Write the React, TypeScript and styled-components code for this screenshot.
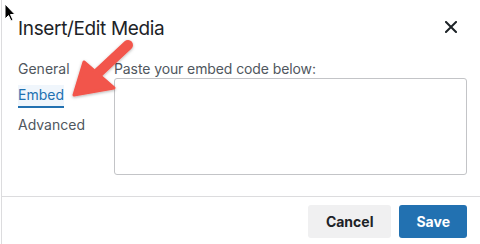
import React from "react";
import styled, { createGlobalStyle } from "styled-components";

const GlobalStyle = createGlobalStyle`
  html, body {
    margin: 0;
    padding: 0;
    background: #ffffff;
  }
  * {
    box-sizing: border-box;
  }
`;

const Dialog = styled.div`
  position: relative;
  width: 480px;
  height: 244px;
  margin-left: 1px;
  border-left: 1px solid #dcdcde;
  background: #ffffff;
  display: flex;
  flex-direction: column;
  font-family: Inter, "Noto Sans", "Liberation Sans", sans-serif;
  overflow: hidden;
`;

const Header = styled.div`
  height: 58px;
  display: flex;
  align-items: center;
  justify-content: space-between;
  padding: 0 20px 0 16px;
`;

const Title = styled.h1`
  margin: 0;
  font-size: 19px;
  line-height: 24px;
  font-weight: 400;
  color: #1d2327;
  letter-spacing: -0.35px;
`;

const CloseButton = styled.button`
  width: 20px;
  height: 20px;
  padding: 0;
  border: none;
  background: none;
  display: flex;
  align-items: center;
  justify-content: center;
  color: #1d2327;
  margin-top: -4px;
`;

const Body = styled.div`
  flex: 1;
  display: flex;
  padding: 1px 14px 0 16px;
`;

const Tabs = styled.div`
  width: 96px;
  display: flex;
  flex-direction: column;
  align-items: flex-start;
  gap: 6px;
`;

const Tab = styled.div<{ $active?: boolean }>`
  font-size: 14px;
  line-height: 20px;
  color: ${(p) => (p.$active ? "#2271b1" : "#50575e")};
  background: ${(p) => (p.$active ? "#f0f6fc" : "transparent")};
  border-bottom: ${(p) => (p.$active ? "2px solid #2271b1" : "none")};
  padding-bottom: ${(p) => (p.$active ? "1px" : "0")};
  margin-bottom: ${(p) => (p.$active ? "1px" : "0")};
`;

const Content = styled.div`
  flex: 1;
  display: flex;
  flex-direction: column;
`;

const Label = styled.label`
  font-size: 14px;
  line-height: 19px;
  color: #50575e;
  letter-spacing: -0.1px;
`;

const EmbedBox = styled.textarea`
  width: 100%;
  height: 97px;
  resize: none;
  border: 1px solid #c3c4c7;
  border-radius: 3px;
  background: #ffffff;
  outline: none;
`;

const Footer = styled.div`
  border-top: 1px solid #dcdcde;
  display: flex;
  justify-content: flex-end;
  align-items: flex-start;
  gap: 8px;
  padding: 8px 14px 0 0;
  height: 48px;
`;

const Button = styled.button<{ $primary?: boolean }>`
  height: 33px;
  padding: 0 ${(p) => (p.$primary ? "17px" : "18px")};
  border: none;
  border-radius: 3px;
  font-family: Inter, "Noto Sans", "Liberation Sans", sans-serif;
  font-size: 14px;
  font-weight: 700;
  background: ${(p) => (p.$primary ? "#2271b1" : "#f0f0f1")};
  color: ${(p) => (p.$primary ? "#ffffff" : "#1d2327")};
`;

const Overlay = styled.svg`
  position: absolute;
  left: 0;
  top: 0;
  pointer-events: none;
`;

const App: React.FC = () => {
  return (
    <>
      <GlobalStyle />
      <Dialog>
        <Header>
          <Title>Insert/Edit Media</Title>
          <CloseButton aria-label="Close">
            <svg width="12" height="12" viewBox="0 0 12 12">
              <path d="M1 1 L11 11 M11 1 L1 11" stroke="#1d2327" strokeWidth="2" strokeLinecap="square" />
            </svg>
          </CloseButton>
        </Header>
        <Body>
          <Tabs>
            <Tab>General</Tab>
            <Tab $active>Embed</Tab>
            <Tab>Advanced</Tab>
          </Tabs>
          <Content>
            <Label>Paste your embed code below:</Label>
            <EmbedBox />
          </Content>
        </Body>
        <Footer>
          <Button>Cancel</Button>
          <Button $primary>Save</Button>
        </Footer>

        {/* annotation arrow */}
        <Overlay width="160" height="120" viewBox="0 0 160 120" style={{ left: -2 }}>
          <defs>
            <filter id="shadow" x="-20%" y="-20%" width="140%" height="140%">
              <feDropShadow dx="0" dy="1" stdDeviation="1.5" floodColor="#000" floodOpacity="0.3" />
            </filter>
          </defs>
          <g filter="url(#shadow)" fill="#f2554b" stroke="#f2554b" strokeLinejoin="round" strokeLinecap="round">
            <path d="M128 45 L98 73" strokeWidth="10" fill="none" />
            <path d="M74 95 L84 62 L114 88 Z" strokeWidth="3" />
          </g>
        </Overlay>

        {/* mouse pointer */}
        <Overlay width="16" height="24" viewBox="0 0 16 24" style={{ left: 1, top: 2 }}>
          <path
            d="M2 2 L2 17 L5.5 13.5 L8 19 L10 18 L7.5 12.5 L12 12.5 Z"
            fill="#000"
            stroke="#fff"
            strokeWidth="1"
            strokeLinejoin="round"
          />
        </Overlay>
      </Dialog>
    </>
  );
};

export default App;
